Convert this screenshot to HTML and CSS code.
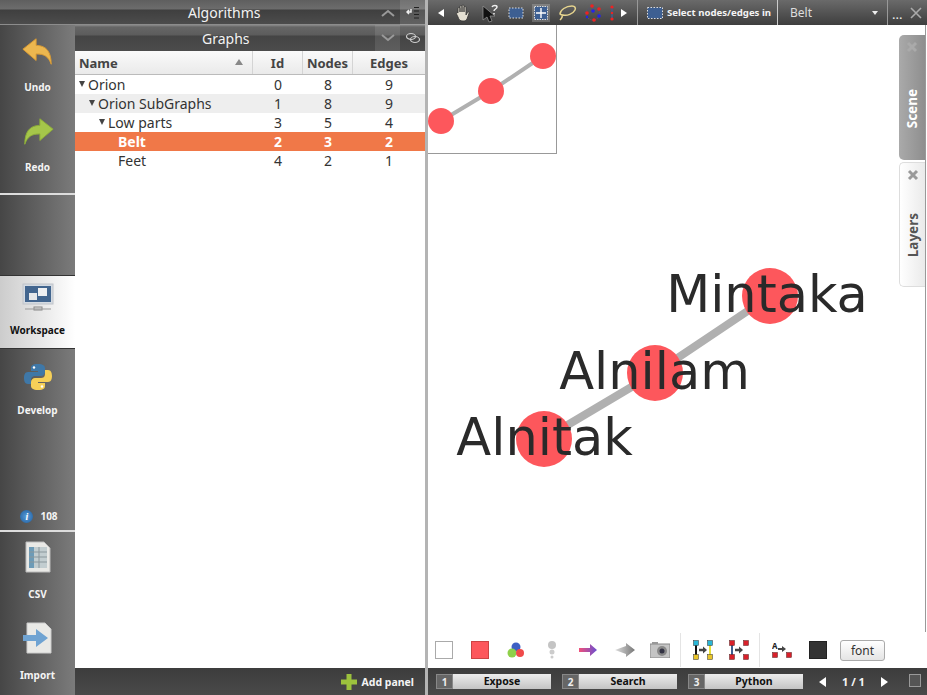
FILE: index.html
```html
<!DOCTYPE html>
<html lang="en">
<head>
  <meta charset="UTF-8" />
  <title>Tulip</title>
  <link rel="stylesheet" href="styles.css">
</head>
<body>

<div class="app">
  <!-- Left side: algorithms, sidebar and graph list -->
  <div class="left">
    <div class="bar-algorithms">
      <span class="bar-title">Algorithms</span>
      <span class="bar-btn">
        <svg width="16" height="10" viewBox="0 0 16 10"><path d="M2 8l6-5 6 5" fill="none" stroke="#999" stroke-width="2"/></svg>
      </span>
      <span class="bar-btn bar-btn-light">
        <svg width="14" height="14" viewBox="0 0 14 14"><path d="M5 3v3H1M3 4L1 6l2 2" fill="none" stroke="#eee" stroke-width="1.500"/><path d="M8 1.500h5M8 5h5M8 8.500h5M8 12h5" stroke="#222" stroke-width="1"/></svg>
      </span>
    </div>

    <div class="left-body">
      <aside class="sidebar">
        <div class="side-group side-top">
          <div class="side-item">
            <svg width="36" height="36" viewBox="0 0 36 36"><path d="M2 15L16 4v7c11 0 16 7 16 20-3-8-7-11-16-11v7z" fill="#ecb74f" stroke="#d99a33" stroke-width="1"/></svg>
            <span>Undo</span>
          </div>
          <div class="side-item">
            <svg width="36" height="36" viewBox="0 0 36 36"><path d="M34 15L20 4v7C9 11 4 18 4 31c3-8 7-11 16-11v7z" fill="#a5c64a" stroke="#8cad38" stroke-width="1"/></svg>
            <span>Redo</span>
          </div>
        </div>
        <div class="side-empty"></div>
        <div class="side-item side-active">
          <svg width="32" height="30" viewBox="0 0 32 30"><rect x="1" y="1" width="30" height="20" fill="#d5dbe2" stroke="#c0c4ca"/><rect x="3" y="3" width="26" height="16" fill="#43668f"/><rect x="7" y="10" width="8" height="7" fill="#e6e8ea"/><rect x="16" y="5" width="9" height="8" fill="#eef0f2"/><rect x="12" y="24" width="8" height="3" fill="#ddd" stroke="#888"/><path d="M3 26h26" stroke="#999"/></svg>
          <span>Workspace</span>
        </div>
        <div class="side-item side-develop">
          <svg width="28" height="28" viewBox="0 0 28 28"><path d="M14 1c-6 0-7 2-7 4v3h7v1H4c-3 0-4 3-4 6s1 6 4 6h3v-4c0-3 2-4 4-4h6c2 0 4-2 4-4V5c0-2-2-4-7-4z" fill="#3f78a8"/><path d="M14 27c6 0 7-2 7-4v-3h-7v-1h10c3 0 4-3 4-6s-1-6-4-6h-3v4c0 3-2 4-4 4h-6c-2 0-4 2-4 4v4c0 2 2 4 7 4z" fill="#f5cf58"/><circle cx="10" cy="4.500" r="1.200" fill="#fff"/><circle cx="18" cy="23.500" r="1.200" fill="#fff"/></svg>
          <span>Develop</span>
        </div>
        <div class="side-spacer"></div>
        <div class="side-info">
          <i class="info-dot">i</i>
          <span>108</span>
        </div>
        <div class="side-group side-bottom">
          <div class="side-item">
            <svg width="26" height="32" viewBox="0 0 26 32"><path d="M1 1h18l6 6v24H1z" fill="#e9e9e6" stroke="#bbb"/><rect x="4" y="6" width="18" height="21" fill="#c2cdd0"/><rect x="4" y="6" width="5" height="21" fill="#6d9bb7"/><path d="M4 11h18M4 16h18M4 21h18M14 6v21" stroke="#8a979c"/></svg>
            <span>CSV</span>
          </div>
          <div class="side-item">
            <svg width="30" height="32" viewBox="0 0 30 32"><path d="M4 1h18l6 6v24H4z" fill="#e9e9e6" stroke="#ccc"/><path d="M0 13h13V7l12 9-12 9v-6H0z" fill="#6fa3d2"/></svg>
            <span>Import</span>
          </div>
        </div>
      </aside>

      <section class="graphs">
        <div class="graphs-title">
          <span class="bar-title">Graphs</span>
          <span class="graphs-btn">
            <svg width="16" height="10" viewBox="0 0 16 10"><path d="M2 2l6 5 6-5" fill="none" stroke="#999" stroke-width="2"/></svg>
          </span>
          <span class="graphs-link">
            <svg width="16" height="12" viewBox="0 0 16 12"><ellipse cx="6" cy="4.500" rx="4.500" ry="3" fill="none" stroke="#ccc" stroke-width="1.200"/><ellipse cx="10" cy="7.500" rx="4.500" ry="3" fill="none" stroke="#ccc" stroke-width="1.200"/></svg>
          </span>
        </div>

        <div class="tree">
          <div class="tree-head">
            <div class="col-name">Name <i class="sort-up"></i></div>
            <div class="col-num">Id</div>
            <div class="col-num">Nodes</div>
            <div class="col-num col-edges">Edges</div>
          </div>
          <div class="tree-row">
            <div class="col-name lvl0"><i class="twist"></i>Orion</div>
            <div class="col-num">0</div><div class="col-num">8</div><div class="col-num col-edges">9</div>
          </div>
          <div class="tree-row row-alt">
            <div class="col-name lvl1"><i class="twist"></i>Orion SubGraphs</div>
            <div class="col-num">1</div><div class="col-num">8</div><div class="col-num col-edges">9</div>
          </div>
          <div class="tree-row">
            <div class="col-name lvl2"><i class="twist"></i>Low parts</div>
            <div class="col-num">3</div><div class="col-num">5</div><div class="col-num col-edges">4</div>
          </div>
          <div class="tree-row row-sel">
            <div class="col-name lvl3">Belt</div>
            <div class="col-num">2</div><div class="col-num">3</div><div class="col-num col-edges">2</div>
          </div>
          <div class="tree-row">
            <div class="col-name lvl3">Feet</div>
            <div class="col-num">4</div><div class="col-num">2</div><div class="col-num col-edges">1</div>
          </div>
        </div>

        <div class="add-panel">
          <svg width="16" height="16" viewBox="0 0 16 16"><path d="M5.500 0h5v5.500h5.500v5h-5.500V16h-5v-5.500H0v-5h5.500z" fill="#9cc23d"/></svg>
          <span>Add panel</span>
        </div>
      </section>
    </div>
  </div>

  <!-- Right side: the graph view -->
  <div class="right">
    <div class="toolbar">
      <svg class="tool-arrow" width="6" height="8" viewBox="0 0 6 8"><path d="M6 0v8L0 4z" fill="#fff"/></svg>
      <div class="tool-icons">
        <svg width="20" height="20" viewBox="0 0 20 20"><path d="M5 10V5.500a1 1 0 012 0V9V3.500a1 1 0 012 0V9V3a1 1 0 012 0v6V4.500a1 1 0 012 0V12l1.500-2.500c.8-1 2-.3 1.500.7L14 16c-1 1.500-2 2-4 2-3 0-4-1-5-4l-1.500-3c-.5-1.200 1-1.800 1.500-1z" fill="#e4dfd2" stroke="#333" stroke-width=".8"/></svg>
        <svg width="20" height="20" viewBox="0 0 20 20"><path d="M3 3v14l4-3 2 5 3-1-2-5h5z" fill="#111" stroke="#999" stroke-width=".7"/><path d="M12 4c1-2 5-2 5 0 0 2-3 2-3 4M14 10v1.500" fill="none" stroke="#eee" stroke-width="1.500"/></svg>
        <svg width="18" height="14" viewBox="0 0 18 14"><rect x="2" y="2" width="14" height="10" fill="#3d5f92" stroke="#ddd" stroke-dasharray="1.500 1.500"/></svg>
        <span class="tool-on"><svg width="14" height="14" viewBox="0 0 14 14"><rect x=".5" y=".5" width="13" height="13" fill="#3d5f92" stroke="#ddd" stroke-dasharray="1.500 1"/><path d="M7 2v10M2 7h10" stroke="#fff" stroke-width="1.400"/></svg></span>
        <svg width="20" height="16" viewBox="0 0 20 16"><path d="M3 9c0-4 6-8 12-8 3 0 4 2 3 4-2 4-8 6-12 5-2 0-3-1-3-1zM5 10c1 2-1 4-2 5" fill="none" stroke="#e7d58f" stroke-width="1.500"/></svg>
        <svg width="18" height="18" viewBox="0 0 18 18"><path d="M8 2l7 3 1 7-6 5-7-3-2-6z" fill="none" stroke="#557" stroke-dasharray="1.500 1"/><g fill="#e22"><circle cx="8" cy="2" r="1.800"/><circle cx="15" cy="5" r="1.800"/><circle cx="10" cy="16" r="1.800"/><circle cx="3" cy="9" r="1.800"/></g><g fill="#22e"><circle cx="9" cy="7" r="1.800"/><circle cx="15" cy="12" r="1.800"/><circle cx="3" cy="13" r="1.200"/></g></svg>
        <svg width="6" height="16" viewBox="0 0 6 16"><path d="M3 2v12" stroke="#3d5f92" stroke-width="1.500"/><circle cx="3" cy="2" r="1.600" fill="#e22"/><circle cx="3" cy="8" r="1.200" fill="#e22"/><circle cx="3" cy="14" r="1.600" fill="#e22"/></svg>
      </div>
      <svg class="tool-arrow" width="6" height="8" viewBox="0 0 6 8"><path d="M0 0v8l6-4z" fill="#fff"/></svg>
      <div class="tool-mode">
        <svg width="16" height="12" viewBox="0 0 16 12"><rect x=".5" y=".5" width="15" height="11" fill="#3d5f92" stroke="#ddd" stroke-dasharray="1.500 1.500"/></svg>
        <span>Select nodes/edges in</span>
      </div>
      <div class="tool-combo">
        <span>Belt</span>
        <i class="combo-arrow"></i>
      </div>
      <div class="tool-end">
        <span class="dots">...</span>
        <svg width="12" height="12" viewBox="0 0 12 12"><path d="M1 1l10 10M11 1L1 11" stroke="#aaa" stroke-width="1.600"/></svg>
      </div>
    </div>

    <div class="view">
      <!-- free canvas: page coords minus (428,25) -->
      <svg class="canvas" width="497" height="604" viewBox="0 0 497 604">
        <path d="M342 271L227 348L116 414" fill="none" stroke="#b0b0b0" stroke-width="8"/>
        <circle cx="342" cy="271" r="28" fill="#fd575c"/>
        <circle cx="227" cy="348" r="28" fill="#fd575c"/>
        <circle cx="116" cy="414" r="28" fill="#fd575c"/>
        <text x="339" y="287" class="node-label">Mintaka</text>
        <text x="226.500" y="364" class="node-label">Alnilam</text>
        <text x="116.500" y="430" class="node-label">Alnitak</text>
      </svg>

      <div class="minimap">
        <svg width="128" height="128" viewBox="0 0 128 128">
          <path d="M115 31L63 66L13 96" fill="none" stroke="#b0b0b0" stroke-width="4"/>
          <circle cx="115" cy="31" r="13" fill="#fd575c"/>
          <circle cx="63" cy="66" r="13" fill="#fd575c"/>
          <circle cx="13" cy="96" r="13" fill="#fd575c"/>
        </svg>
      </div>

      <i class="view-edge"></i>

      <div class="side-tabs">
        <div class="side-tab tab-scene">
          <svg width="12" height="12" viewBox="0 0 12 12"><path d="M2 2l8 8M10 2l-8 8" stroke="#aaa" stroke-width="3"/></svg>
          <span>Scene</span>
        </div>
        <div class="side-tab tab-layers">
          <svg width="12" height="12" viewBox="0 0 12 12"><path d="M2 2l8 8M10 2l-8 8" stroke="#999" stroke-width="3"/></svg>
          <span>Layers</span>
        </div>
      </div>

      <div class="view-tools">
        <div class="tool-group group-look">
          <span class="color-box box-white"></span>
          <span class="color-box box-red"></span>
          <svg width="18" height="18" viewBox="0 0 18 18"><circle cx="9" cy="6" r="4.500" fill="#3d5fc4"/><circle cx="5" cy="12" r="4.500" fill="#8fd04a"/><circle cx="13" cy="12" r="4" fill="#f04a4a"/></svg>
          <svg width="18" height="20" viewBox="-3 0 18 20"><circle cx="6" cy="5" r="4" fill="#c4c4c4"/><circle cx="6" cy="12" r="2.500" fill="#ccc"/><circle cx="6" cy="17" r="1.500" fill="#ccc"/></svg>
          <svg width="18" height="12" viewBox="0 0 18 12"><defs><linearGradient id="arrowGrad"><stop offset="0" stop-color="#f0507a"/><stop offset="1" stop-color="#6a4fd0"/></linearGradient></defs><path d="M0 4h11V0l7 6-7 6V8H0z" fill="url(#arrowGrad)"/></svg>
          <svg width="20" height="14" viewBox="0 0 20 14"><defs><linearGradient id="greyGrad"><stop offset="0" stop-color="#ddd"/><stop offset="1" stop-color="#777"/></linearGradient></defs><path d="M0 7l11-4V0l9 7-9 7v-3z" fill="url(#greyGrad)"/></svg>
          <svg class="tool-camera" width="20" height="16" viewBox="0 0 20 16"><rect x="0" y="2" width="20" height="14" fill="#c4c4c4" stroke="#888"/><rect x="2" y="0" width="6" height="2" fill="#999"/><circle cx="12" cy="9" r="5" fill="#888"/><circle cx="12" cy="9" r="2.500" fill="#334"/></svg>
        </div>
        <i class="tool-sep"></i>
        <div class="tool-group group-edges">
          <svg width="20" height="20" viewBox="0 0 20 20"><path d="M3 4v12" stroke="#111" stroke-width="2"/><path d="M17 4v12" stroke="#e6e03a" stroke-width="2"/><path d="M6 10h5" stroke="#444" stroke-width="2.500"/><path d="M10 6.500l4 3.500-4 3.500z" fill="#444"/><g fill="#2ab6d6" stroke="#333" stroke-width=".5"><rect x=".5" y=".5" width="5" height="5"/><rect x="14.500" y=".5" width="5" height="5"/></g><g fill="#e8c42a" stroke="#333" stroke-width=".5"><rect x=".5" y="14.500" width="5" height="5"/><rect x="14.500" y="14.500" width="5" height="5"/></g></svg>
          <svg width="20" height="20" viewBox="0 0 20 20"><path d="M3 4v12" stroke="#3d5f92" stroke-width="2"/><path d="M6 10h5" stroke="#444" stroke-width="2.500"/><path d="M10 6.500l4 3.500-4 3.500z" fill="#444"/><g fill="#d8202a" stroke="#522" stroke-width=".5"><rect x=".5" y=".5" width="5" height="5"/><rect x="14.500" y=".5" width="5" height="5"/><rect x=".5" y="14.500" width="5" height="5"/><rect x="14.500" y="14.500" width="5" height="5"/></g></svg>
        </div>
        <i class="tool-sep"></i>
        <div class="tool-group group-label">
          <svg width="20" height="18" viewBox="0 0 20 18"><path d="M6 8h5" stroke="#444" stroke-width="2"/><path d="M10 5l4 3-4 3z" fill="#444"/><g fill="#d8202a" stroke="#522" stroke-width=".5"><rect x=".5" y="11.500" width="5" height="5"/><rect x="14.500" y="11.500" width="5" height="5"/></g><text x="0" y="8" class="tool-a">A</text></svg>
          <span class="color-box box-dark"></span>
          <button class="font-btn">font</button>
        </div>
      </div>
    </div>

    <div class="statusbar">
      <div class="panel-tab"><b>1</b><span>Expose</span></div>
      <div class="panel-tab"><b>2</b><span>Search</span></div>
      <div class="panel-tab"><b>3</b><span>Python</span></div>
      <div class="pager">
        <svg width="7" height="10" viewBox="0 0 7 10"><path d="M7 0v10L0 5z" fill="#fff"/></svg>
        <span>1 / 1</span>
        <svg width="7" height="10" viewBox="0 0 7 10"><path d="M0 0v10l7-5z" fill="#fff"/></svg>
      </div>
      <i class="status-square"></i>
    </div>
  </div>
</div>

</body>
</html>
```

FILE: styles.css
```css
html, body {
  margin: 0;
  padding: 0;
  height: 100%;
  overflow: hidden;
}

body {
  font-family: 'Noto Sans', sans-serif;
  font-size: 14px;
  color: #333;
  background: #fff;
}

.app {
  display: flex;
  width: 927px;
  height: 695px;
  background: #b4b4b4;
}

.left {
  width: 425px;
  display: flex;
  flex-direction: column;
}

.right {
  width: 499px;
  margin-left: 3px;
  display: flex;
  flex-direction: column;
  position: relative;
  background: #fff;
}

/* top bars */
.bar-algorithms {
  height: 25px;
  display: flex;
  align-items: center;
  position: relative;
  background: linear-gradient(#5f5f5f 0, #6c6c6c 9px, #3f3f3f 10px, #4c4c4c 24px, #ccc 25px);
}

.bar-title {
  color: #f2f2f2;
  font-size: 14px;
}

.bar-algorithms .bar-title {
  margin-left: 188px;
  flex: 1;
}

.bar-btn {
  width: 25px;
  height: 25px;
  display: flex;
  align-items: center;
  justify-content: center;
}

.bar-btn-light {
  background: rgba(255, 255, 255, 0.12);
}

.left-body {
  flex: 1;
  display: flex;
  min-height: 0;
}

/* sidebar */
.sidebar {
  width: 75px;
  display: flex;
  flex-direction: column;
  background: linear-gradient(90deg, #464646, #7b7b7b);
}

.side-item {
  display: flex;
  flex-direction: column;
  align-items: center;
  color: #f4f4f4;
  font-size: 10px;
  font-weight: bold;
  height: 81px;
  padding-top: 8px;
  box-sizing: border-box;
}

.side-item svg {
  height: 34px;
  margin-bottom: 9px;
}

.side-item span {
  line-height: 14px;
}

.side-top {
  height: 168px;
  border-bottom: 2px solid #ddd;
}

.side-top .side-item {
  height: 80px;
  padding-top: 10px;
}

.side-top .side-item span {
  margin-top: 2px;
}

.side-empty {
  height: 80px;
}

.side-active {
  height: 74px;
  background: linear-gradient(90deg, #ccc, #fff);
  border-top: 1px solid #333;
  border-bottom: 1px solid #333;
  color: #111;
  padding-top: 5px;
}

.side-active svg {
  margin-bottom: 8px;
}

.side-develop {
  padding-top: 11px;
  height: 80px;
}

.side-spacer {
  flex: 1;
}

.side-info {
  display: flex;
  align-items: center;
  justify-content: center;
  gap: 7px;
  height: 28px;
  padding-left: 3px;
  color: #f4f4f4;
  font-size: 10px;
  font-weight: bold;
}

.info-dot {
  width: 13px;
  height: 13px;
  border-radius: 50%;
  background: radial-gradient(#5a9bd8, #1c5c9c);
  color: #fff;
  font: italic bold 10px/13px 'Liberation Serif', serif;
  text-align: center;
}

.side-bottom {
  border-top: 2px solid #ddd;
  height: 163px;
}

.side-bottom .side-item span {
  margin-top: 4px;
}

/* graph list */
.graphs {
  flex: 1;
  display: flex;
  flex-direction: column;
  background: #fff;
}

.graphs-title {
  height: 26px;
  display: flex;
  align-items: center;
  background: linear-gradient(#8a8a8a 0, #666 2px, #5c5c5c 10px, #444 11px, #4c4c4c 26px);
}

.graphs-title .bar-title {
  margin-left: 127px;
  flex: 1;
}

.graphs-btn {
  width: 25px;
  height: 26px;
  display: flex;
  align-items: center;
  justify-content: center;
  background: rgba(255, 255, 255, 0.1);
}

.graphs-link {
  width: 25px;
  display: flex;
  justify-content: center;
}

.tree {
  flex: 1;
}

.tree-head,
.tree-row {
  display: flex;
  align-items: center;
}

.tree-head {
  height: 23px;
  background: linear-gradient(#fafafa, #eaeaea);
  border-bottom: 1px solid #bbb;
  font-size: 13px;
  font-weight: bold;
  color: #444;
}

.tree-head .col-name,
.tree-head .col-num {
  height: 23px;
  line-height: 25px;
  border-right: 1px solid #d4d4d4;
  box-sizing: border-box;
}

.tree-head .col-edges {
  border-right: none;
}

.tree-row {
  height: 19px;
  line-height: 19px;
}

.row-alt {
  background: #eeeeee;
}

.row-sel {
  background: #f07848;
  color: #fff;
  font-weight: bold;
}

.col-name {
  width: 178px;
  padding-left: 4px;
  box-sizing: border-box;
  position: relative;
}

.col-num {
  width: 50px;
  text-align: center;
}

.col-edges {
  width: 72px;
  padding-right: 0;
}

.lvl0 { padding-left: 13px; }
.lvl1 { padding-left: 23px; }
.lvl2 { padding-left: 33px; }
.lvl3 { padding-left: 43px; }

.twist {
  position: absolute;
  margin-left: -9px;
  margin-top: 6px;
  border-left: 3.5px solid transparent;
  border-right: 3.5px solid transparent;
  border-top: 6px solid #444;
}

.sort-up {
  position: absolute;
  right: 9px;
  top: 8px;
  border-left: 4px solid transparent;
  border-right: 4px solid transparent;
  border-bottom: 6px solid #888;
}

.add-panel {
  height: 27px;
  display: flex;
  align-items: center;
  justify-content: flex-end;
  gap: 5px;
  padding-right: 11px;
  background: linear-gradient(#3c3c3c, #4a4a4a);
  color: #f4f4f4;
  font-size: 10.5px;
  font-weight: bold;
}

/* right toolbar */
.toolbar {
  height: 25px;
  display: flex;
  align-items: center;
  padding-left: 10px;
  box-sizing: border-box;
  background: linear-gradient(#6a6a6a, #3e3e3e);
}

.tool-icons {
  display: flex;
  align-items: center;
  gap: 7px;
  margin: 0 6px 0 9px;
  height: 25px;
}

.tool-on {
  display: flex;
  padding: 2px;
  background: rgba(255, 255, 255, 0.2);
}

.tool-mode {
  display: flex;
  align-items: center;
  gap: 4px;
  margin-left: 10px;
  padding-left: 9px;
  width: 140px;
  height: 25px;
  box-sizing: border-box;
  border-left: 1px solid #999;
  color: #f4f4f4;
  font-size: 9.6px;
  font-weight: bold;
  white-space: nowrap;
}

.tool-combo {
  width: 111px;
  height: 25px;
  box-sizing: border-box;
  display: flex;
  align-items: center;
  justify-content: space-between;
  padding: 0 9px 0 12px;
  border-left: 1px solid #ccc;
  border-right: 1px solid #999;
  color: #ddd;
  font-size: 12px;
}

.combo-arrow {
  border-left: 3.5px solid transparent;
  border-right: 3.5px solid transparent;
  border-top: 4px solid #eee;
}

.tool-end {
  display: flex;
  align-items: center;
  gap: 8px;
  padding-left: 4px;
}

.dots {
  color: #eee;
  font-size: 13px;
  margin-top: 3px;
}

/* view */
.view {
  flex: 1;
  position: relative;
  background: #fff;
  display: flex;
  flex-direction: column;
  justify-content: flex-end;
  min-height: 0;
}

.canvas {
  position: absolute;
  left: 0;
  top: 0;
}

.node-label {
  font-family: 'DejaVu Sans', sans-serif;
  font-size: 51px;
  fill: #2a2a2a;
  text-anchor: middle;
}

.minimap {
  position: absolute;
  left: 0;
  top: 0;
  width: 128px;
  height: 128px;
  border-right: 1px solid #999;
  border-bottom: 1px solid #999;
  background: #fff;
  overflow: hidden;
}

.minimap svg {
  display: block;
}

.view-edge {
  position: absolute;
  right: 1px;
  top: 0;
  bottom: 36px;
  width: 1px;
  background: #999;
}

.side-tabs {
  position: absolute;
  right: 2px;
  top: 10px;
  width: 26px;
  display: flex;
  flex-direction: column;
  gap: 2px;
}

.side-tab {
  height: 125px;
  box-sizing: border-box;
  border-radius: 5px 0 0 5px;
  display: flex;
  flex-direction: column;
  align-items: center;
  padding-top: 6px;
  font-size: 13.5px;
  font-weight: bold;
}

.side-tab span {
  writing-mode: vertical-rl;
  transform: rotate(180deg);
  line-height: 26px;
}

.tab-scene {
  background: linear-gradient(90deg, #aaa, #8e8e8e);
  color: #fff;
}

.tab-scene span {
  margin-top: 36px;
}

.tab-layers {
  background: linear-gradient(90deg, #fff, #eaeaea);
  border: 1px solid #ddd;
  border-right: none;
  color: #555;
}

.tab-layers span {
  margin-top: 32px;
}

.view-tools {
  display: flex;
  align-items: center;
  height: 36px;
  padding-left: 7px;
  position: relative;
}

.tool-group {
  display: flex;
  align-items: center;
}

.group-look { gap: 18px; }
.group-edges { gap: 16px; }
.group-label { gap: 17px; }

.tool-camera {
  margin-left: -3px;
}

.color-box {
  width: 16px;
  height: 16px;
  display: block;
  border: 1px solid #aaa;
}

.box-white { background: #fff; }
.box-red { background: #fd575c; border-color: #c44; }
.box-dark { background: #333; border-color: #222; }

.tool-sep {
  width: 1px;
  height: 34px;
  background: #e4e4e4;
  margin: 0 12px 0 10px;
}

.tool-a {
  font-family: 'Noto Sans', sans-serif;
  font-size: 8px;
  font-weight: bold;
  fill: #222;
}

.font-btn {
  height: 21px;
  width: 45px;
  margin-left: -4px;
  padding: 0;
  font-family: inherit;
  font-size: 12px;
  color: #333;
  background: linear-gradient(#fff, #e4e4e4);
  border: 1px solid #aaa;
  border-radius: 3px;
}

/* bottom bar */
.statusbar {
  height: 27px;
  display: flex;
  align-items: center;
  padding-left: 8px;
  box-sizing: border-box;
  background: linear-gradient(#3c3c3c, #4a4a4a);
  position: relative;
}

.panel-tab {
  display: flex;
  width: 115px;
  height: 15px;
  margin-right: 11px;
}

.panel-tab b {
  width: 17px;
  background: #666;
  color: #eee;
  font-size: 10px;
  line-height: 15px;
  text-align: center;
  border: 1px solid #888;
  box-sizing: border-box;
}

.panel-tab span {
  flex: 1;
  background: linear-gradient(#ececec, #c4c4c4);
  color: #111;
  font-size: 10.5px;
  font-weight: bold;
  line-height: 15px;
  text-align: center;
}

.pager {
  display: flex;
  align-items: center;
  gap: 16px;
  margin-left: 5px;
  color: #f4f4f4;
  font-size: 11px;
  font-weight: bold;
}

.status-square {
  position: absolute;
  right: 6px;
  top: 6px;
  width: 10px;
  height: 11px;
  border: 1px solid #999;
  background: #555;
}
```
